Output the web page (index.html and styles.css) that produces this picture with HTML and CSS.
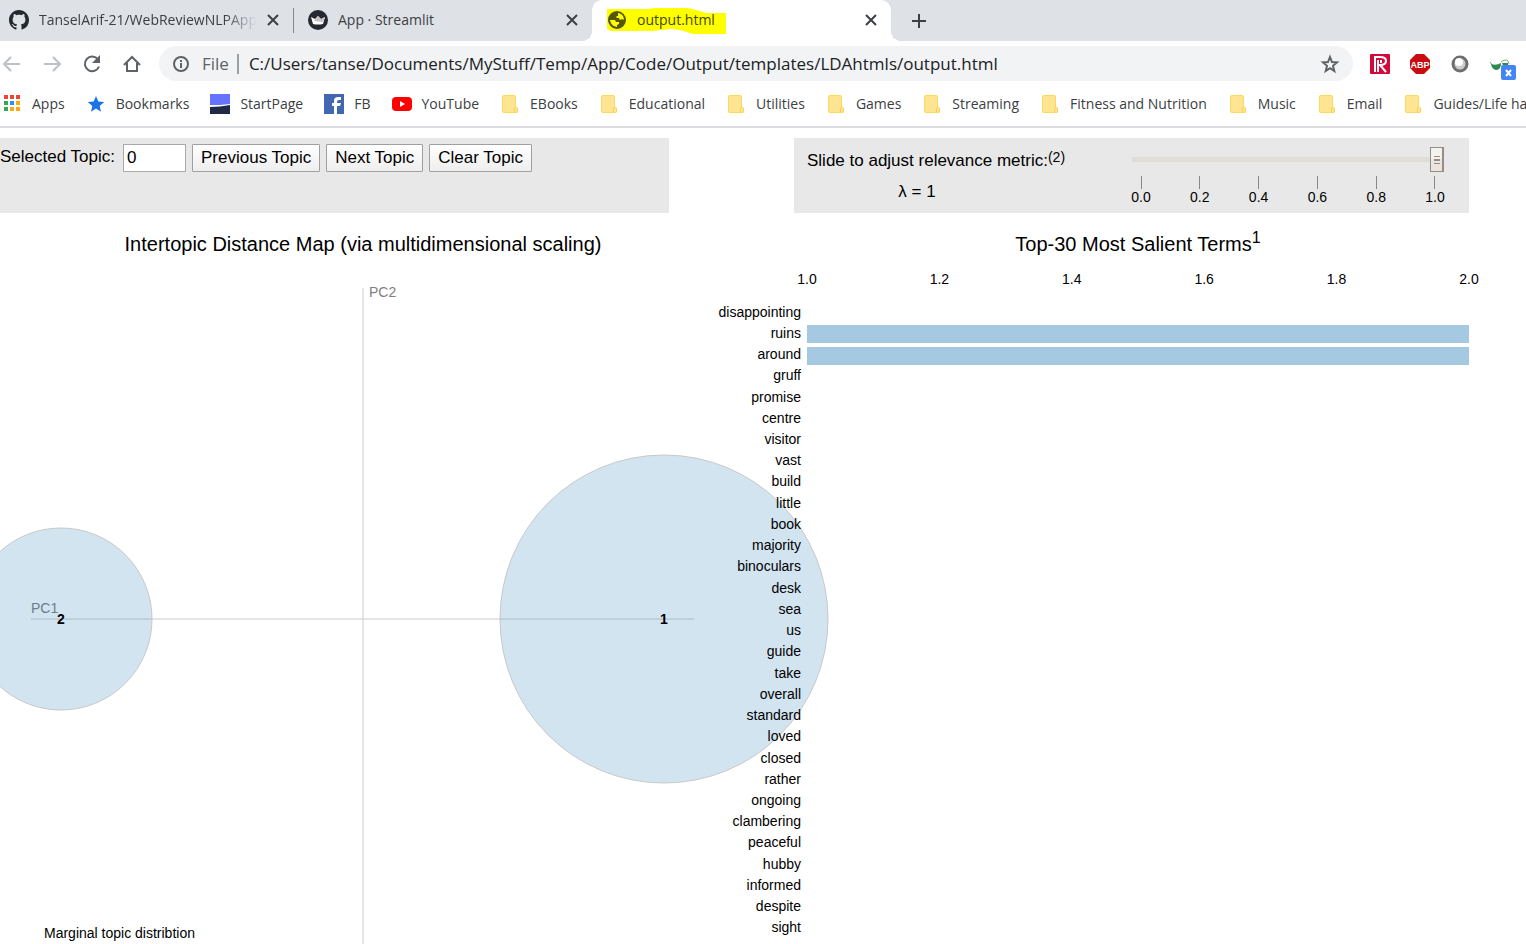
FILE: index.html
```html
<!DOCTYPE html>
<html lang="en">
<head>
<meta charset="utf-8">
<title>output.html</title>
<link rel="stylesheet" href="styles.css">
</head>
<body>
<header class="browser">
  <nav class="tabs" aria-label="Tabs">
    <div class="tab tab-first">
      <svg class="icon20" viewBox="0 0 16 16"><path fill="#24292e" d="M8 0C3.58 0 0 3.58 0 8c0 3.54 2.29 6.53 5.47 7.59.4.07.55-.17.55-.38 0-.19-.01-.82-.01-1.49-2.01.37-2.53-.49-2.69-.94-.09-.23-.48-.94-.82-1.13-.28-.15-.68-.52-.01-.53.63-.01 1.08.58 1.23.82.72 1.21 1.87.87 2.33.66.07-.52.28-.87.51-1.07-1.78-.2-3.64-.89-3.64-3.95 0-.87.31-1.59.82-2.15-.08-.2-.36-1.02.08-2.12 0 0 .67-.21 2.2.82.64-.18 1.32-.27 2-.27s1.36.09 2 .27c1.53-1.04 2.2-.82 2.2-.82.44 1.1.16 1.92.08 2.12.51.56.82 1.27.82 2.15 0 3.07-1.87 3.75-3.65 3.95.29.25.54.73.54 1.48 0 1.07-.01 1.93-.01 2.2 0 .21.15.46.55.38A8.01 8.01 0 0 0 16 8c0-4.42-3.58-8-8-8z"/></svg>
      <span class="tab-title fade">TanselArif-21/WebReviewNLPApp</span>
      <button class="close" aria-label="Close tab"><svg viewBox="0 0 12 12"><path d="M1 1l10 10M11 1L1 11"/></svg></button>
    </div>
    <div class="tab divided">
      <svg class="icon20" viewBox="0 0 20 20"><circle cx="10" cy="10" r="10" fill="#262730"/><path fill="#fff" d="M3 7l4 2 3-3 3 3 4-2-2 7q-5 1-10 0z"/><path fill="#c4c4c8" d="M10 6l3 3 4-2-2 5-9-1z"/></svg>
      <span class="tab-title">App · Streamlit</span>
      <button class="close" aria-label="Close tab"><svg viewBox="0 0 12 12"><path d="M1 1l10 10M11 1L1 11"/></svg></button>
    </div>
    <div class="tab active">
      <svg class="marker" viewBox="0 0 119 26" aria-hidden="true"><path fill="#ff0" d="M0 1h40l8-1h33l12 3 6 2h20v21H86l-13-4-9-1-19 2H4l-4-2z"/></svg>
      <svg class="icon18" viewBox="0 0 18 18"><circle cx="9" cy="9" r="8" fill="#555800" stroke="#555800" stroke-width="2"/><path fill="#ff0" d="M10 2q6 1 6 7l-2-1-2 1-1-2-2 0-1-1 1-1 1 0zM2 9l5 0 1 2 3 0 0 2-2 1 0 2q-6-1-7-7z"/></svg>
      <span class="tab-title marked">output.html</span>
      <button class="close" aria-label="Close tab"><svg viewBox="0 0 12 12"><path d="M1 1l10 10M11 1L1 11"/></svg></button>
    </div>
    <button class="new-tab" aria-label="New tab"><svg viewBox="0 0 16 16"><path d="M8 1v14M1 8h14"/></svg></button>
  </nav>

  <div class="toolbar">
    <div class="nav-buttons">
      <button class="nav dim" aria-label="Back"><svg viewBox="0 0 24 24"><path d="M20 12H4M11 5l-7 7 7 7"/></svg></button>
      <button class="nav dim" aria-label="Forward"><svg viewBox="0 0 24 24"><path d="M4 12h16M13 5l7 7-7 7"/></svg></button>
      <button class="nav" aria-label="Reload"><svg viewBox="0 0 24 24"><path d="M18 7.500a7.300 7.300 0 1 0 1 7"/><path class="solid" d="M20 3v8h-8z"/></svg></button>
      <button class="nav" aria-label="Home"><svg viewBox="0 0 24 24"><path d="M4 13l8-8 8 8M7 11v8h10v-8"/></svg></button>
    </div>
    <div class="address">
      <svg class="info" viewBox="0 0 18 18"><circle cx="9" cy="9" r="7" /><path d="M9 8v5M9 5v2"/></svg>
      <label class="scheme" for="url">File</label>
      <input id="url" class="url" type="text" value="C:/Users/tanse/Documents/MyStuff/Temp/App/Code/Output/templates/LDAhtmls/output.html">
      <button class="star" aria-label="Bookmark this page"><svg viewBox="0 0 20 20"><path d="M10 3l2 5 5 .4-4 3.400 1.300 5.200L10 14.200 5.700 17 7 11.800 3 8.400 8 8z"/></svg></button>
    </div>
    <div class="extensions">
      <button class="ext" aria-label="Extension R"><svg viewBox="0 0 24 24"><rect x="2" y="2" width="20" height="20" rx="1" fill="#d5083a"/><path fill="none" stroke="#fff" stroke-width="2" d="M6 5h6q6 0 6 4t-6 4h-1M7 5v15M10 8v12M13 8v3M12 13l6 7"/></svg></button>
      <button class="ext" aria-label="Adblock Plus"><svg viewBox="0 0 24 24"><path fill="#c70d0f" d="M8 2h8l6 6v8l-6 6H8l-6-6V8z"/><text x="12" y="16" text-anchor="middle" class="abp">ABP</text></svg></button>
      <button class="ext" aria-label="Extension"><svg viewBox="0 0 24 24"><circle cx="12" cy="12" r="7" fill="#ccc" stroke="#6e6e6e" stroke-width="3"/><circle cx="11" cy="10" r="4" fill="#fff"/></svg></button>
      <button class="ext wide" aria-label="Glasses"><svg viewBox="0 0 30 24"><path fill="none" stroke="#6cab7a" stroke-width="1" d="M2 10l3 4M13 10q7-5 8 2"/><path fill="#2e8b4b" d="M3 12q5 2 10-1 0 6-4 7-5 0-6-6zM14 11h6v4q-5 0-6-4z"/><rect x="13" y="13" width="15" height="15" rx="2" fill="#4285f4"/><path stroke="#fff" stroke-width="2" d="M18 18l5 6M23 18l-5 6"/></svg></button>
    </div>
  </div>

  <nav class="bookmarks" aria-label="Bookmarks">
    <a href="#"><svg viewBox="0 0 20 20"><path fill="#f34235" d="M2 1h4v4H2zM8 1h4v4H8zM14 1h4v4h-4z"/><path fill="#34a853" d="M2 7h4v4H2zM2 13h4v4H2z"/><path fill="#2196f3" d="M8 7h4v4H8z"/><path fill="#fbab0d" d="M14 7h4v4h-4zM8 13h4v4H8zM14 13h4v4h-4z"/></svg>Apps</a>
    <a href="#"><svg viewBox="0 0 20 20"><path fill="#1a73e8" d="M10 2l2.300 5.500 5.900.5-4.500 3.900L15 17.700l-5-3.100-5 3.100 1.300-5.800L1.800 8l5.900-.5z"/></svg>Bookmarks</a>
    <a href="#"><svg viewBox="0 0 20 20"><path fill="#6573ff" d="M0 0h20v11H0z"/><path fill="#fff" d="M0 12l20-2v3H0z"/><path fill="#202945" d="M0 13q10 0 20-2v9H0z"/></svg>StartPage</a>
    <a href="#"><svg viewBox="0 0 20 20"><rect width="20" height="20" fill="#4267b2"/><path fill="#fff" d="M10 20v-8H8V9h2V7q0-4 4-4h3v3h-2q-2 0-2 2v1h4l-1 3h-3v8z"/></svg>FB</a>
    <a href="#"><svg viewBox="0 0 20 20"><rect y="3" width="20" height="14" rx="4" fill="#f00"/><path fill="#fff" d="M8 7l5 3-5 3z"/></svg>YouTube</a>
    <a href="#"><svg viewBox="0 0 20 20"><use href="#folder"/></svg>EBooks</a>
    <a href="#"><svg viewBox="0 0 20 20"><use href="#folder"/></svg>Educational</a>
    <a href="#"><svg viewBox="0 0 20 20"><use href="#folder"/></svg>Utilities</a>
    <a href="#"><svg viewBox="0 0 20 20"><use href="#folder"/></svg>Games</a>
    <a href="#"><svg viewBox="0 0 20 20"><use href="#folder"/></svg>Streaming</a>
    <a href="#"><svg viewBox="0 0 20 20"><use href="#folder"/></svg>Fitness and Nutrition</a>
    <a href="#"><svg viewBox="0 0 20 20"><use href="#folder"/></svg>Music</a>
    <a href="#"><svg viewBox="0 0 20 20"><use href="#folder"/></svg>Email</a>
    <a href="#"><svg viewBox="0 0 20 20"><use href="#folder"/></svg>Guides/Life ha</a>
  </nav>
  <svg class="defs" aria-hidden="true"><defs><g id="folder"><rect x="2.500" y="1.500" width="13" height="17" rx="1" fill="#ffe591" stroke="#fbd95c"/><rect x="14.500" y="13.500" width="3" height="5" rx="1" fill="#ffe591" stroke="#f8d04e"/></g></defs></svg>
</header>

<main class="page">
  <div class="controls">
    <form class="panel topic-form">
      <label for="topic">Selected Topic:</label>
      <input id="topic" class="topic" type="text" value="0">
      <button type="button">Previous Topic</button>
      <button type="button">Next Topic</button>
      <button type="button">Clear Topic</button>
    </form>
    <form class="panel lambda-form">
      <div class="lambda-text">
        <label for="lambda">Slide to adjust relevance metric:<sup>(2)</sup></label>
        <output for="lambda">λ = 1</output>
      </div>
      <div class="slider">
        <input id="lambda" type="range" min="0" max="1" step="0.01" value="1">
        <div class="scale"><span>0.0</span><span>0.2</span><span>0.4</span><span>0.6</span><span>0.8</span><span>1.0</span></div>
      </div>
    </form>
  </div>

  <div class="charts">
    <section class="map">
      <h2>Intertopic Distance Map (via multidimensional scaling)</h2>
      <svg class="map-canvas" viewBox="0 0 694 684">
        <path class="axis" d="M363 20v664M31 351h663"/>
        <text class="axis-name" x="369" y="29">PC2</text>
        <text class="axis-name" x="31" y="345">PC1</text>
        <circle class="topic-dot" cx="664" cy="351" r="164"/>
        <circle class="topic-dot" cx="61" cy="351" r="91"/>
        <circle class="topic-ring" cx="664" cy="351" r="164"/>
        <circle class="topic-ring" cx="61" cy="351" r="91"/>
        <text class="topic-id" x="664" y="356">1</text>
        <text class="topic-id" x="61" y="356">2</text>
        <text class="legend" x="44" y="670">Marginal topic distribtion</text>
      </svg>
    </section>
    <section class="terms">
      <h2>Top-30 Most Salient Terms<sup>1</sup></h2>
      <div class="ticks"><span>1.0</span><span>1.2</span><span>1.4</span><span>1.6</span><span>1.8</span><span>2.0</span></div>
      <ul class="bars">
        <li>disappointing</li><li class="full">ruins</li><li class="full">around</li><li>gruff</li><li>promise</li><li>centre</li><li>visitor</li><li>vast</li><li>build</li><li>little</li><li>book</li><li>majority</li><li>binoculars</li><li>desk</li><li>sea</li><li>us</li><li>guide</li><li>take</li><li>overall</li><li>standard</li><li>loved</li><li>closed</li><li>rather</li><li>ongoing</li><li>clambering</li><li>peaceful</li><li>hubby</li><li>informed</li><li>despite</li><li>sight</li>
      </ul>
    </section>
  </div>
</main>
</body>
</html>
```

FILE: styles.css
```css
* { box-sizing: border-box; }
body {
  margin: 0;
  height: 100vh;
  overflow: hidden;
  background: #fff;
  color: #000;
  font-family: "Liberation Sans", Arial, sans-serif;
}
button { font: inherit; color: inherit; }
svg { display: block; flex: none; }

/* Browser frame */
.browser {
  font-family: "Segoe UI", "Open Sans", sans-serif;
  font-size: 14px;
  color: #3c4043;
  border-bottom: 2px solid #dadce0;
  overflow: hidden;
}
.browser button { border: 0; padding: 0; background: none; }
.defs { position: absolute; width: 0; height: 0; }
.tabs { display: flex; height: 41px; background: #dee1e6; }
.tab {
  position: relative;
  display: flex;
  align-items: center;
  flex: 0 1 299px;
  min-width: 0;
  padding: 0 14px 2px 15px;
  gap: 10px;
}
.tab-first { flex-basis: 293px; padding-left: 9px; }
.divided::before {
  content: "";
  position: absolute;
  left: 0;
  top: 8px;
  width: 1px;
  height: 25px;
  background: #80868b;
}
.active { background: #fff; border-radius: 10px 10px 0 0; }
.active::before, .active::after {
  content: "";
  position: absolute;
  bottom: 0;
  width: 10px;
  height: 10px;
}
.active::before { left: -10px; background: radial-gradient(circle at 0 0, #dee1e6 10px, #fff 10px); }
.active::after { right: -10px; background: radial-gradient(circle at 100% 0, #dee1e6 10px, #fff 10px); }
.icon20 { width: 20px; height: 20px; position: relative; }
.icon18 { width: 20px; height: 18px; position: relative; }
.marker { position: absolute; left: 15px; top: 8px; width: 119px; height: 26px; }
.tab-title { position: relative; flex: 1; white-space: nowrap; overflow: hidden; }
.fade { -webkit-mask-image: linear-gradient(90deg, #000 85%, transparent); mask-image: linear-gradient(90deg, #000 85%, transparent); }
.marked { color: #444700; }
.close svg { width: 12px; height: 12px; fill: none; stroke: #3c4043; stroke-width: 2; }
.new-tab { margin-left: 20px; padding-bottom: 2px; }
.new-tab svg { width: 16px; height: 16px; fill: none; stroke: #3c4043; stroke-width: 2; }

.toolbar { display: flex; align-items: center; height: 45px; padding-right: 8px; }
.nav-buttons { display: flex; gap: 16px; padding-right: 15px; }
.nav svg { width: 24px; height: 24px; fill: none; stroke: #5f6368; stroke-width: 2; }
.nav .solid { fill: #5f6368; stroke: none; }
.dim svg { stroke: #bdc1c6; }
.address {
  display: flex;
  align-items: center;
  flex: 1;
  height: 35px;
  padding: 0 13px;
  border-radius: 18px;
  background: #f1f3f4;
  font-size: 17px;
}
.info { width: 18px; height: 18px; fill: none; stroke: #5f6368; stroke-width: 2; }
.scheme { margin-left: 12px; padding-right: 8px; color: #5f6368; line-height: 20px; border-right: 2px solid #9aa0a6; }
.url { flex: 1; min-width: 0; border: 0; padding: 0 0 0 10px; background: none; font: inherit; color: #202124; }
.star svg { width: 20px; height: 20px; fill: none; stroke: #5f6368; stroke-width: 2; }
.extensions { display: flex; gap: 16px; padding-left: 15px; }
.ext svg { width: 24px; height: 24px; overflow: visible; }
.ext.wide svg { width: 30px; }
.abp { font: bold 9px "Liberation Sans", sans-serif; fill: #fff; }

.bookmarks { display: flex; align-items: center; gap: 21px; height: 40px; padding: 0 0 5px 2px; }
.bookmarks a { display: flex; flex: none; align-items: center; gap: 10px; color: inherit; text-decoration: none; white-space: nowrap; }
.bookmarks svg { width: 20px; height: 20px; }

/* Topic page */
.page { padding: 10px 57px 0 0; }
.controls { display: grid; grid-template-columns: minmax(0, 669fr) minmax(0, 675fr); column-gap: 125px; }
.panel { display: flex; height: 75px; background: #e8e8e8; font-size: 17px; }
.topic-form { align-items: flex-start; gap: 6px; padding-top: 6px; }
.topic-form label { min-width: 117px; line-height: 26px; }
.topic { width: 63px; height: 28px; margin: 0; padding: 0 3px; border: 1px solid #a9a9a9; background: #fff; font: inherit; }
.topic-form button { height: 28px; padding: 0 8px; border: 1px solid #a0a0a0; border-radius: 1px; background: linear-gradient(#fff, #eee); line-height: 24px; }
.lambda-form { justify-content: space-between; padding: 9px 25px 0 13px; }
.lambda-text { display: flex; flex-direction: column; align-items: center; gap: 3px; font-size: 17px; }
.lambda-text label, .lambda-text output { line-height: 28px; }
.lambda-text output { padding-right: 38px; }
sup { line-height: 0; }
.lambda-text sup { font-size: 14px; vertical-align: 4px; }
.slider { width: 312px; }
.slider input { display: block; width: 100%; height: 25px; margin: 0; appearance: none; background: none; }
.slider input::-webkit-slider-runnable-track { height: 5px; background: #e0ddd7; }
.slider input::-webkit-slider-thumb {
  appearance: none;
  width: 14px;
  height: 25px;
  margin-top: -10px;
  border: 1px solid #978d86;
  border-right-width: 2px;
  background: linear-gradient(#978d86, #978d86) 50% 8px / 6px 1px no-repeat, linear-gradient(#978d86, #978d86) 50% 11px / 6px 2px no-repeat, linear-gradient(#978d86, #978d86) 50% 15px / 6px 1px no-repeat, linear-gradient(#f4f2ee 50%, #ebe4df 50%);
}
.scale { display: flex; justify-content: space-between; padding: 4px 9px 0 9px; font-size: 14px; }
.scale span { display: flex; flex-direction: column; align-items: center; width: 0; line-height: 17px; }
.scale span::before { content: ""; width: 1px; height: 13px; background: #888; }

.charts { display: flex; }
h2 { margin: 0; font-size: 20px; font-weight: normal; line-height: 24px; text-align: center; white-space: nowrap; }
.map { flex: none; width: 694px; padding-top: 19px; }
.map h2 { padding-left: 32px; padding-bottom: 12px; }
.map-canvas { width: 694px; height: 684px; overflow: visible; }
.axis { fill: none; stroke: #ccc; }
.axis-name { font-size: 14px; fill: #808080; }
.topic-dot { fill: #1f77b4; fill-opacity: .2; }
.topic-ring { fill: none; stroke: #c8c8c8; }
.topic-id { font-size: 14px; font-weight: bold; text-anchor: middle; }
.legend { font-size: 14px; }
.terms { position: relative; flex: 1; min-width: 0; padding-top: 19px; }
.terms h2 { padding-left: 113px; }
.terms h2 sup { font-size: 16px; vertical-align: 8px; }
.ticks { display: flex; justify-content: space-between; margin: 14px 0 0 113px; font-size: 14px; line-height: 18px; }
.ticks span { display: flex; justify-content: center; width: 0; }
.bars { display: grid; grid-template-rows: repeat(30, 1fr); height: 637px; margin: 13px 0 0; padding: 0; list-style: none; font-size: 14px; }
.bars li { display: grid; grid-template-columns: 107px 1fr; column-gap: 6px; align-items: center; text-align: right; }
.bars .full::after { content: ""; height: 18px; align-self: end; background: #a5c9e1; }
```
